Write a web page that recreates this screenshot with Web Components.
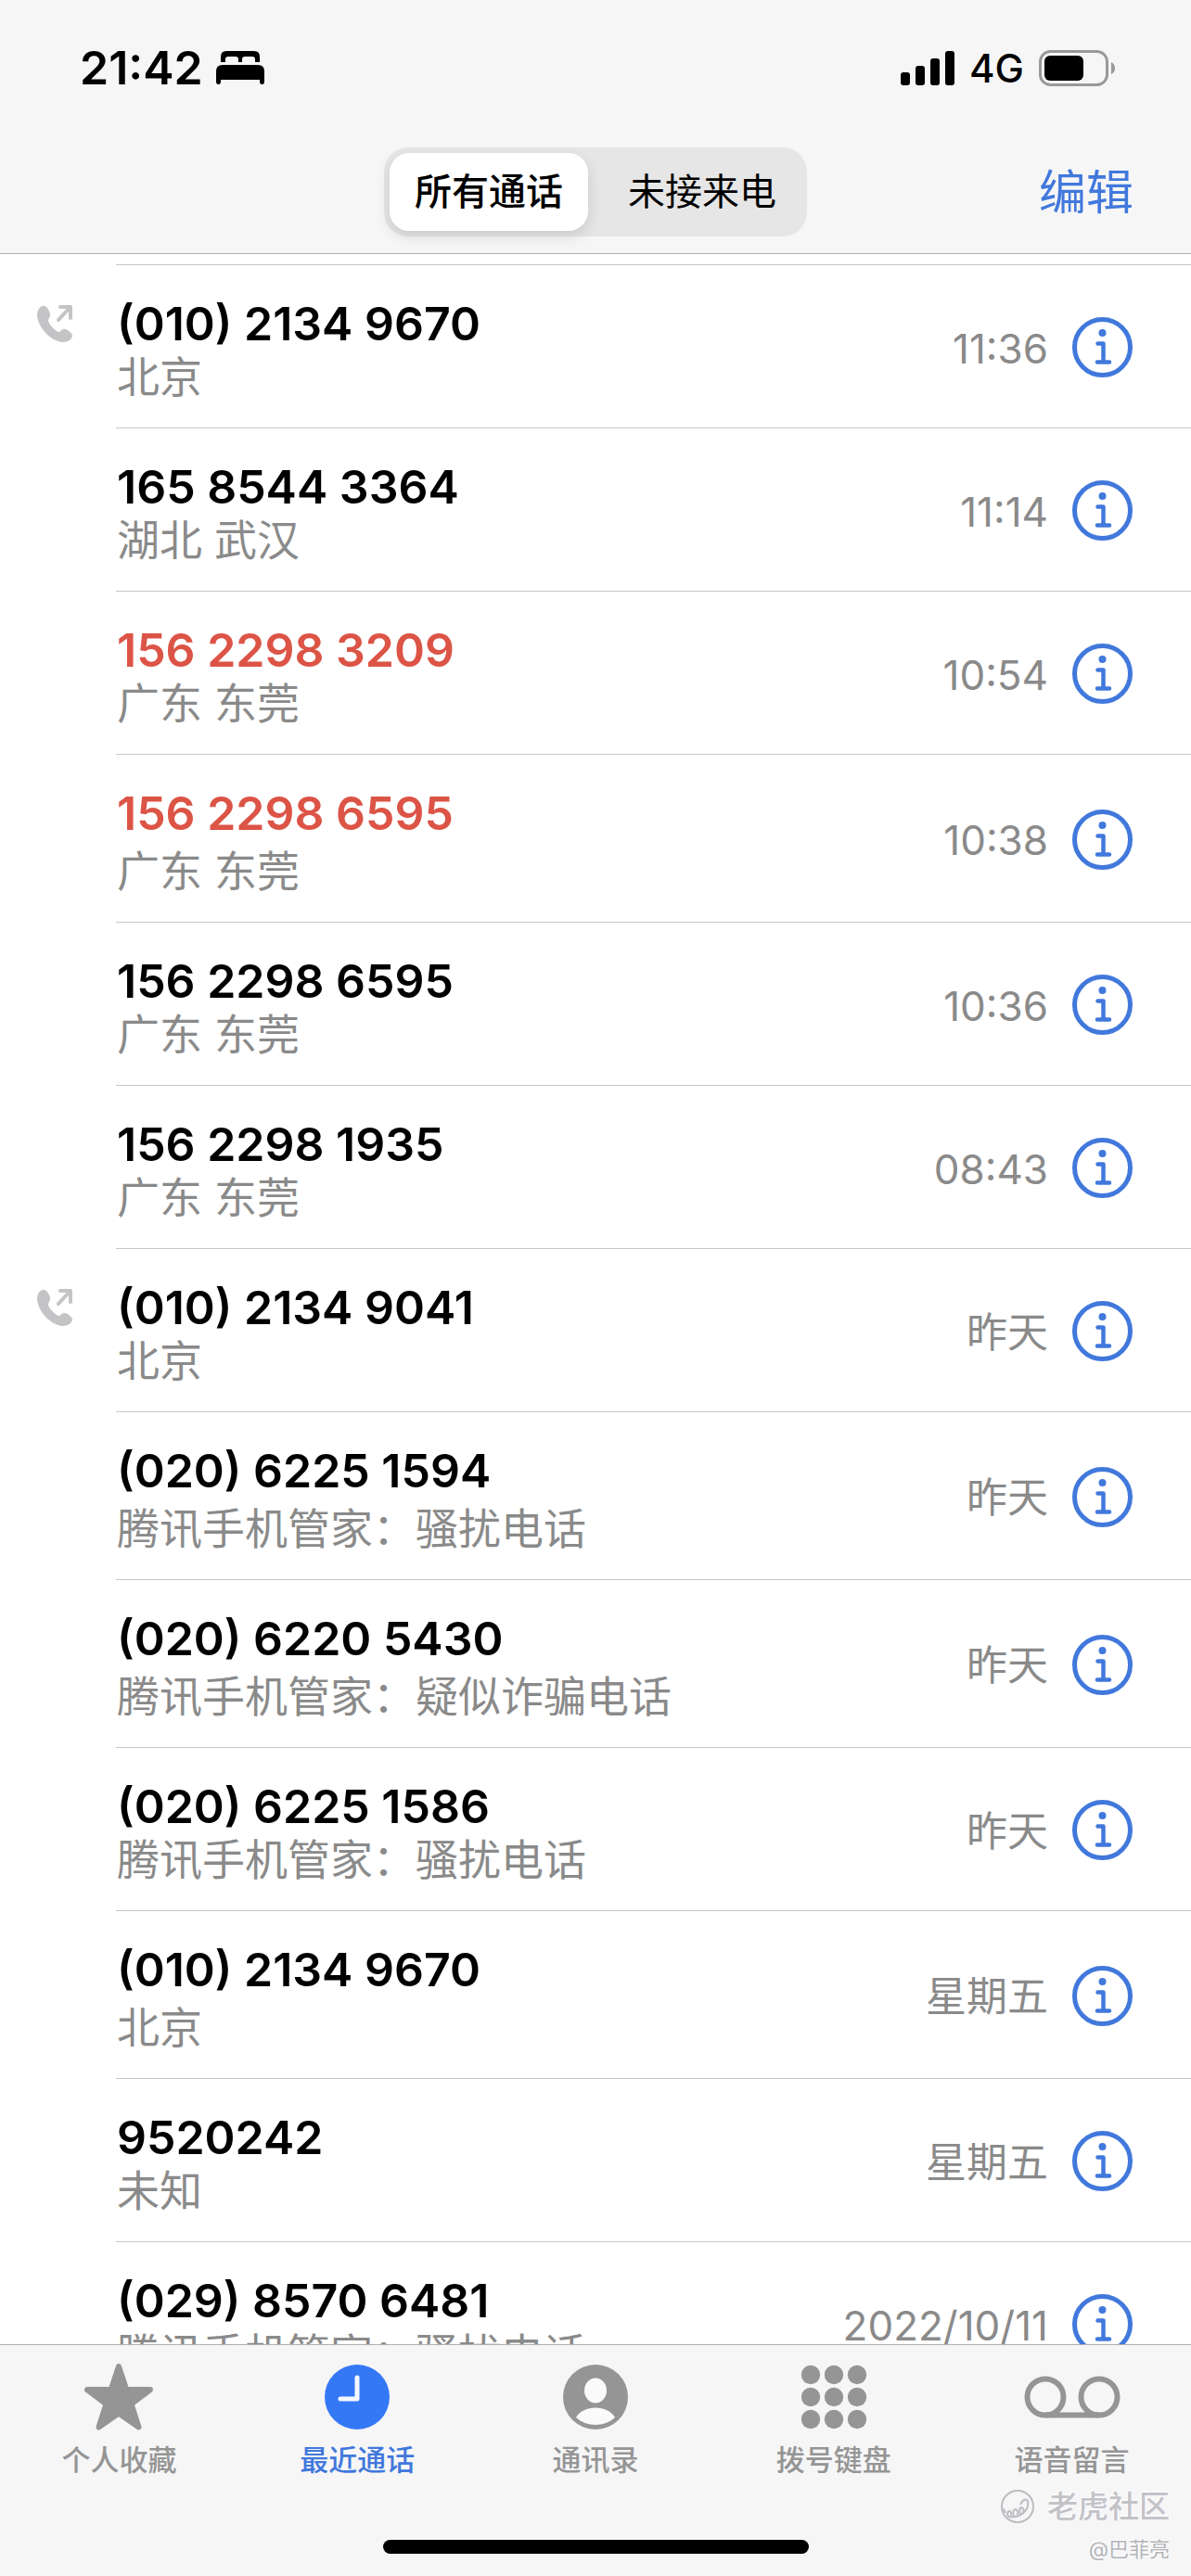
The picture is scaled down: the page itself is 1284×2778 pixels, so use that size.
<!DOCTYPE html>
<html lang="zh-CN">
<head>
<meta charset="utf-8">
<meta name="viewport" content="width=device-width, initial-scale=1">
<title>最近通话</title>
<style>
    body {
        margin: 0;
        background: #fff;
        font-family: Inter, 'Noto Sans CJK SC', sans-serif;
        --blue: #4178dc;
        --red: #dc5446;
        --grey: #8a8a8a;
        --tab: #959595;
        --bar: #f6f6f7;
        --line: #c6c6c8;
        --edge: #b0b0b2;
    }
</style>
</head>
<body>
<phone-app>
    <status-bar slot="top" time="21:42" network="4G"></status-bar>
    <nav-bar slot="top">
        <segmented-control>
            <segment-item selected>所有通话</segment-item>
            <segment-item>未接来电</segment-item>
        </segmented-control>
        <span slot="action">编辑</span>
    </nav-bar>

    <call-row outgoing time="11:36">(010) 2134 9670<span slot="place">北京</span></call-row>
    <call-row time="11:14">165 8544 3364<span slot="place">湖北 武汉</span></call-row>
    <call-row missed time="10:54">156 2298 3209<span slot="place">广东 东莞</span></call-row>
    <call-row missed roomy time="10:38">156 2298 6595<span slot="place">广东 东莞</span></call-row>
    <call-row time="10:36">156 2298 6595<span slot="place">广东 东莞</span></call-row>
    <call-row time="08:43">156 2298 1935<span slot="place">广东 东莞</span></call-row>
    <call-row outgoing time="昨天">(010) 2134 9041<span slot="place">北京</span></call-row>
    <call-row roomy time="昨天">(020) 6225 1594<span slot="place">腾讯手机管家：骚扰电话</span></call-row>
    <call-row roomy time="昨天">(020) 6220 5430<span slot="place">腾讯手机管家：疑似诈骗电话</span></call-row>
    <call-row time="昨天">(020) 6225 1586<span slot="place">腾讯手机管家：骚扰电话</span></call-row>
    <call-row roomy time="星期五">(010) 2134 9670<span slot="place">北京</span></call-row>
    <call-row time="星期五">9520242<span slot="place">未知</span></call-row>
    <call-row time="2022/10/11">(029) 8570 6481<span slot="place">腾讯手机管家：骚扰电话</span></call-row>

    <tab-bar slot="bottom">
        <tab-item icon="star">个人收藏</tab-item>
        <tab-item icon="clock" selected>最近通话</tab-item>
        <tab-item icon="person">通讯录</tab-item>
        <tab-item icon="keypad">拨号键盘</tab-item>
        <tab-item icon="voicemail">语音留言</tab-item>
    </tab-bar>
    <water-mark slot="bottom" user="@巴菲亮">老虎社区</water-mark>
</phone-app>

<script>
const icons = {
    star: `<svg width="76" height="74" viewBox="0 0 76 74"><path d="M38 4 46.300 29 72 29 51.500 44.500 59.500 69.500 38 54.500 16.500 69.500 24.500 44.500 4 29 29.700 29Z" fill="currentColor" stroke="currentColor" stroke-width="6" stroke-linejoin="round"/></svg>`,
    clock: `<svg width="70" height="70" viewBox="0 0 70 70"><circle cx="35" cy="35" r="35" fill="#3478f6"/><path d="M35 14V37H17" fill="none" stroke="#f4f8ff" stroke-width="5" stroke-linecap="round" stroke-linejoin="round"/></svg>`,
    person: `<svg width="70" height="70" viewBox="0 0 70 70"><circle cx="35" cy="35" r="35" fill="currentColor"/><ellipse cx="35" cy="28" rx="12" ry="13.500" fill="#fafafa"/><path d="M14 57C22 43 48 43 56 57C45 67.500 25 67.500 14 57Z" fill="#fafafa"/></svg>`,
    keypad: `<svg width="72" height="70" viewBox="0 0 72 70" fill="currentColor">${
        [11, 35, 59].map(y => [11, 36, 61].map(x => `<circle cx="${x}" cy="${y}" r="10.200"/>`).join('')).join('')
    }</svg>`,
    voicemail: `<svg width="104" height="46" viewBox="0 0 104 46" fill="none" stroke="currentColor" stroke-width="6"><circle cx="23" cy="23" r="19.500"/><circle cx="81" cy="23" r="19.500"/><path d="M23 42.500H81"/></svg>`
};

class PhoneApp extends HTMLElement {
    constructor() {
        super();
        this.attachShadow({mode: 'open'}).innerHTML = `
            <style>
                :host { display: flex; flex-direction: column; height: 100vh; position: relative; }
                header { background: var(--bar); border-bottom: 1px solid var(--edge); }
                main { flex: 1; min-height: 0; overflow: hidden; padding-top: 11px; }
                footer { background: var(--bar); border-top: 1px solid var(--edge); }
            </style>
            <header><slot name="top"></slot></header>
            <main><slot></slot></main>
            <footer><slot name="bottom"></slot></footer>
        `;
    }
}

class StatusBar extends HTMLElement {
    constructor() {
        super();
        this.attachShadow({mode: 'open'}).innerHTML = `
            <style>
                :host { display: flex; justify-content: space-between; align-items: center; height: 64px; padding: 41px 82px 37px 86px; }
                div { display: flex; align-items: center; }
                .left { gap: 14px; font-size: 50px; font-weight: 600; }
                .right { gap: 16px; font-size: 42px; font-weight: 500; }
                svg { display: block; }
            </style>
            <div class="left">
                <span>${this.getAttribute('time')}</span>
                <svg width="52" height="36" viewBox="0 0 52 36">
                    <path d="M5 12V6Q5 0 11 0H41Q47 0 47 6V12H42V9Q42 6 39 6H31Q28 6 28 9V12H24V9Q24 6 21 6H13Q10 6 10 9V12Z"/>
                    <path d="M0 22Q0 15 7 15H45Q52 15 52 22V33Q52 36 49.500 36T47 33V31H5V33Q5 36 2.500 36T0 33Z"/>
                </svg>
            </div>
            <div class="right">
                <svg width="58" height="37" viewBox="0 0 58 37">
                    <rect y="23" width="10" height="14" rx="3"/>
                    <rect x="16" y="16" width="10" height="21" rx="3"/>
                    <rect x="32" y="8" width="10" height="29" rx="3"/>
                    <rect x="48" width="10" height="37" rx="3"/>
                </svg>
                <span>${this.getAttribute('network')}</span>
                <svg width="82" height="39" viewBox="0 0 82 39">
                    <rect x="1.500" y="1.500" width="72" height="36" rx="11" fill="none" stroke="#999" stroke-width="3"/>
                    <rect x="6" y="6" width="42" height="27" rx="6"/>
                    <path d="M78 13Q82 15 82 19.500T78 26Z" fill="#999"/>
                </svg>
            </div>
        `;
    }
}

class NavBar extends HTMLElement {
    constructor() {
        super();
        this.attachShadow({mode: 'open'}).innerHTML = `
            <style>
                :host { display: grid; grid-template-columns: 1fr auto 1fr; align-items: center; padding: 17px 62px 18px; }
                ::slotted(segmented-control) { grid-column: 2; }
                button { justify-self: end; padding: 2px 0 0; border: 0; background: none; color: var(--blue); font: 400 51px/60px Inter, 'Noto Sans CJK SC', sans-serif; }
            </style>
            <slot></slot>
            <button type="button"><slot name="action"></slot></button>
        `;
    }
}

class SegmentedControl extends HTMLElement {
    constructor() {
        super();
        this.attachShadow({mode: 'open'}).innerHTML = `
            <style>
                :host { display: flex; gap: 16px; padding: 6px; border-radius: 26px; background: #e6e6e7; }
            </style>
            <slot></slot>
        `;
    }
}

class SegmentItem extends HTMLElement {
    constructor() {
        super();
        this.attachShadow({mode: 'open'}).innerHTML = `
            <style>
                :host { display: block; }
                button { display: block; height: 84px; padding: 0 27px; border: 0; border-radius: 21px; background: none; color: #000; font: 400 40px/84px Inter, 'Noto Sans CJK SC', sans-serif; }
                :host([selected]) button { background: #fff; font-weight: 500; box-shadow: 0 6px 16px rgba(0, 0, 0, .12); }
            </style>
            <button type="button"><slot></slot></button>
        `;
    }
}

class CallRow extends HTMLElement {
    constructor() {
        super();
        this.attachShadow({mode: 'open'}).innerHTML = `
            <style>
                :host { display: grid; grid-template-columns: 125px 1fr; }
                .side { padding: 43px 0 0 39px; }
                .body { display: flex; align-items: center; gap: 26px; padding-right: 63px; border-top: 1px solid var(--line); }
                .who { flex: 1; padding: 33px 0 28px 1px; white-space: nowrap; }
                .number { font-size: 50px; line-height: 60px; font-weight: 600; color: #000; }
                .place { font-size: 46px; line-height: 54px; color: var(--grey); }
                :host([missed]) .number { color: var(--red); }
                :host([roomy]) .place { padding-top: 5px; }
                time { padding-top: 4px; font-size: 44px; line-height: 54px; color: var(--grey); }
                button { padding: 2px 0 0; border: 0; background: none; color: var(--blue); }
                svg { display: block; }
            </style>
            <div class="side">${this.hasAttribute('outgoing') ? `
                <svg width="40" height="42" viewBox="0 0 40 42" role="img" aria-label="呼出">
                    <path d="M9 2C5 1 1 6 1 12C2 25 15 40 29 41C35 41 39 37 39 34C39 31 32 26 29 27L25 30C22 31 12 20 13 17L15 13C16 9 12 3 9 2Z" fill="#c4c4c6"/>
                    <path d="M24 17 36 4M26 3H37V15" fill="none" stroke="#c4c4c6" stroke-width="4" stroke-linecap="round" stroke-linejoin="round"/>
                </svg>` : ''}
            </div>
            <div class="body">
                <div class="who">
                    <div class="number"><slot></slot></div>
                    <div class="place"><slot name="place"></slot></div>
                </div>
                <time>${this.getAttribute('time')}</time>
                <button type="button" aria-label="详细信息">
                    <svg width="65" height="65" viewBox="0 0 65 65" fill="none" stroke="currentColor" stroke-width="5">
                        <circle cx="32.500" cy="32.500" r="30"/>
                        <circle cx="32.500" cy="17" r="4" fill="currentColor" stroke="none"/>
                        <path d="M27.500 28.500H33.500V48M27 48.500H40" stroke-width="4.500" stroke-linecap="round" stroke-linejoin="round"/>
                    </svg>
                </button>
            </div>
        `;
    }
}

class TabBar extends HTMLElement {
    constructor() {
        super();
        this.attachShadow({mode: 'open'}).innerHTML = `
            <style>
                :host { display: block; }
                nav { display: flex; padding: 14px 0 66px; }
                ::slotted(*) { flex: 1; }
                .home { width: 459px; height: 15px; margin: 0 auto; border-radius: 8px; background: #000; }
                .safe { padding-bottom: 24px; }
            </style>
            <nav><slot></slot></nav>
            <div class="safe"><div class="home"></div></div>
        `;
    }
}

class TabItem extends HTMLElement {
    constructor() {
        super();
        this.attachShadow({mode: 'open'}).innerHTML = `
            <style>
                :host { display: block; color: var(--tab); }
                :host([selected]) { color: var(--blue); }
                button { display: block; width: 100%; padding: 0; border: 0; background: none; color: inherit; font: 500 31px/40px Inter, 'Noto Sans CJK SC', sans-serif; }
                .icon { display: flex; align-items: center; justify-content: center; height: 84px; margin-bottom: 6px; }
            </style>
            <button type="button">
                <div class="icon">${icons[this.getAttribute('icon')]}</div>
                <slot></slot>
            </button>
        `;
    }
}

class WaterMark extends HTMLElement {
    constructor() {
        super();
        this.attachShadow({mode: 'open'}).innerHTML = `
            <style>
                /* floats over the tab bar */
                :host { position: absolute; right: 23px; bottom: 15px; display: grid; justify-items: end; gap: 12px; color: #c2c2c8; text-shadow: -1px -1px 0 #fff; }
                div { display: flex; align-items: center; gap: 14px; font-size: 33px; line-height: 40px; font-weight: 500; }
                small { font-size: 22px; line-height: 28px; color: #b4b4b8; }
            </style>
            <div>
                <svg width="36" height="36" viewBox="0 0 36 36" fill="none" stroke="#bcbcc1" stroke-width="2">
                    <circle cx="18" cy="18" r="17"/>
                    <path d="M2 21Q4 21 5 25M8 29Q6 24 9 23Q12 24 11 28M14 28Q12 22 16 21Q19 23 18 27M21 26Q19 20 22 19Q26 21 24 24M8 29C20 31 31 23 29 12C27 9 23 11 21 16"/>
                </svg>
                <slot></slot>
            </div>
            <small>${this.getAttribute('user')}</small>
        `;
    }
}

customElements.define('phone-app', PhoneApp);
customElements.define('status-bar', StatusBar);
customElements.define('nav-bar', NavBar);
customElements.define('segmented-control', SegmentedControl);
customElements.define('segment-item', SegmentItem);
customElements.define('call-row', CallRow);
customElements.define('tab-bar', TabBar);
customElements.define('tab-item', TabItem);
customElements.define('water-mark', WaterMark);
</script>
</body>
</html>
